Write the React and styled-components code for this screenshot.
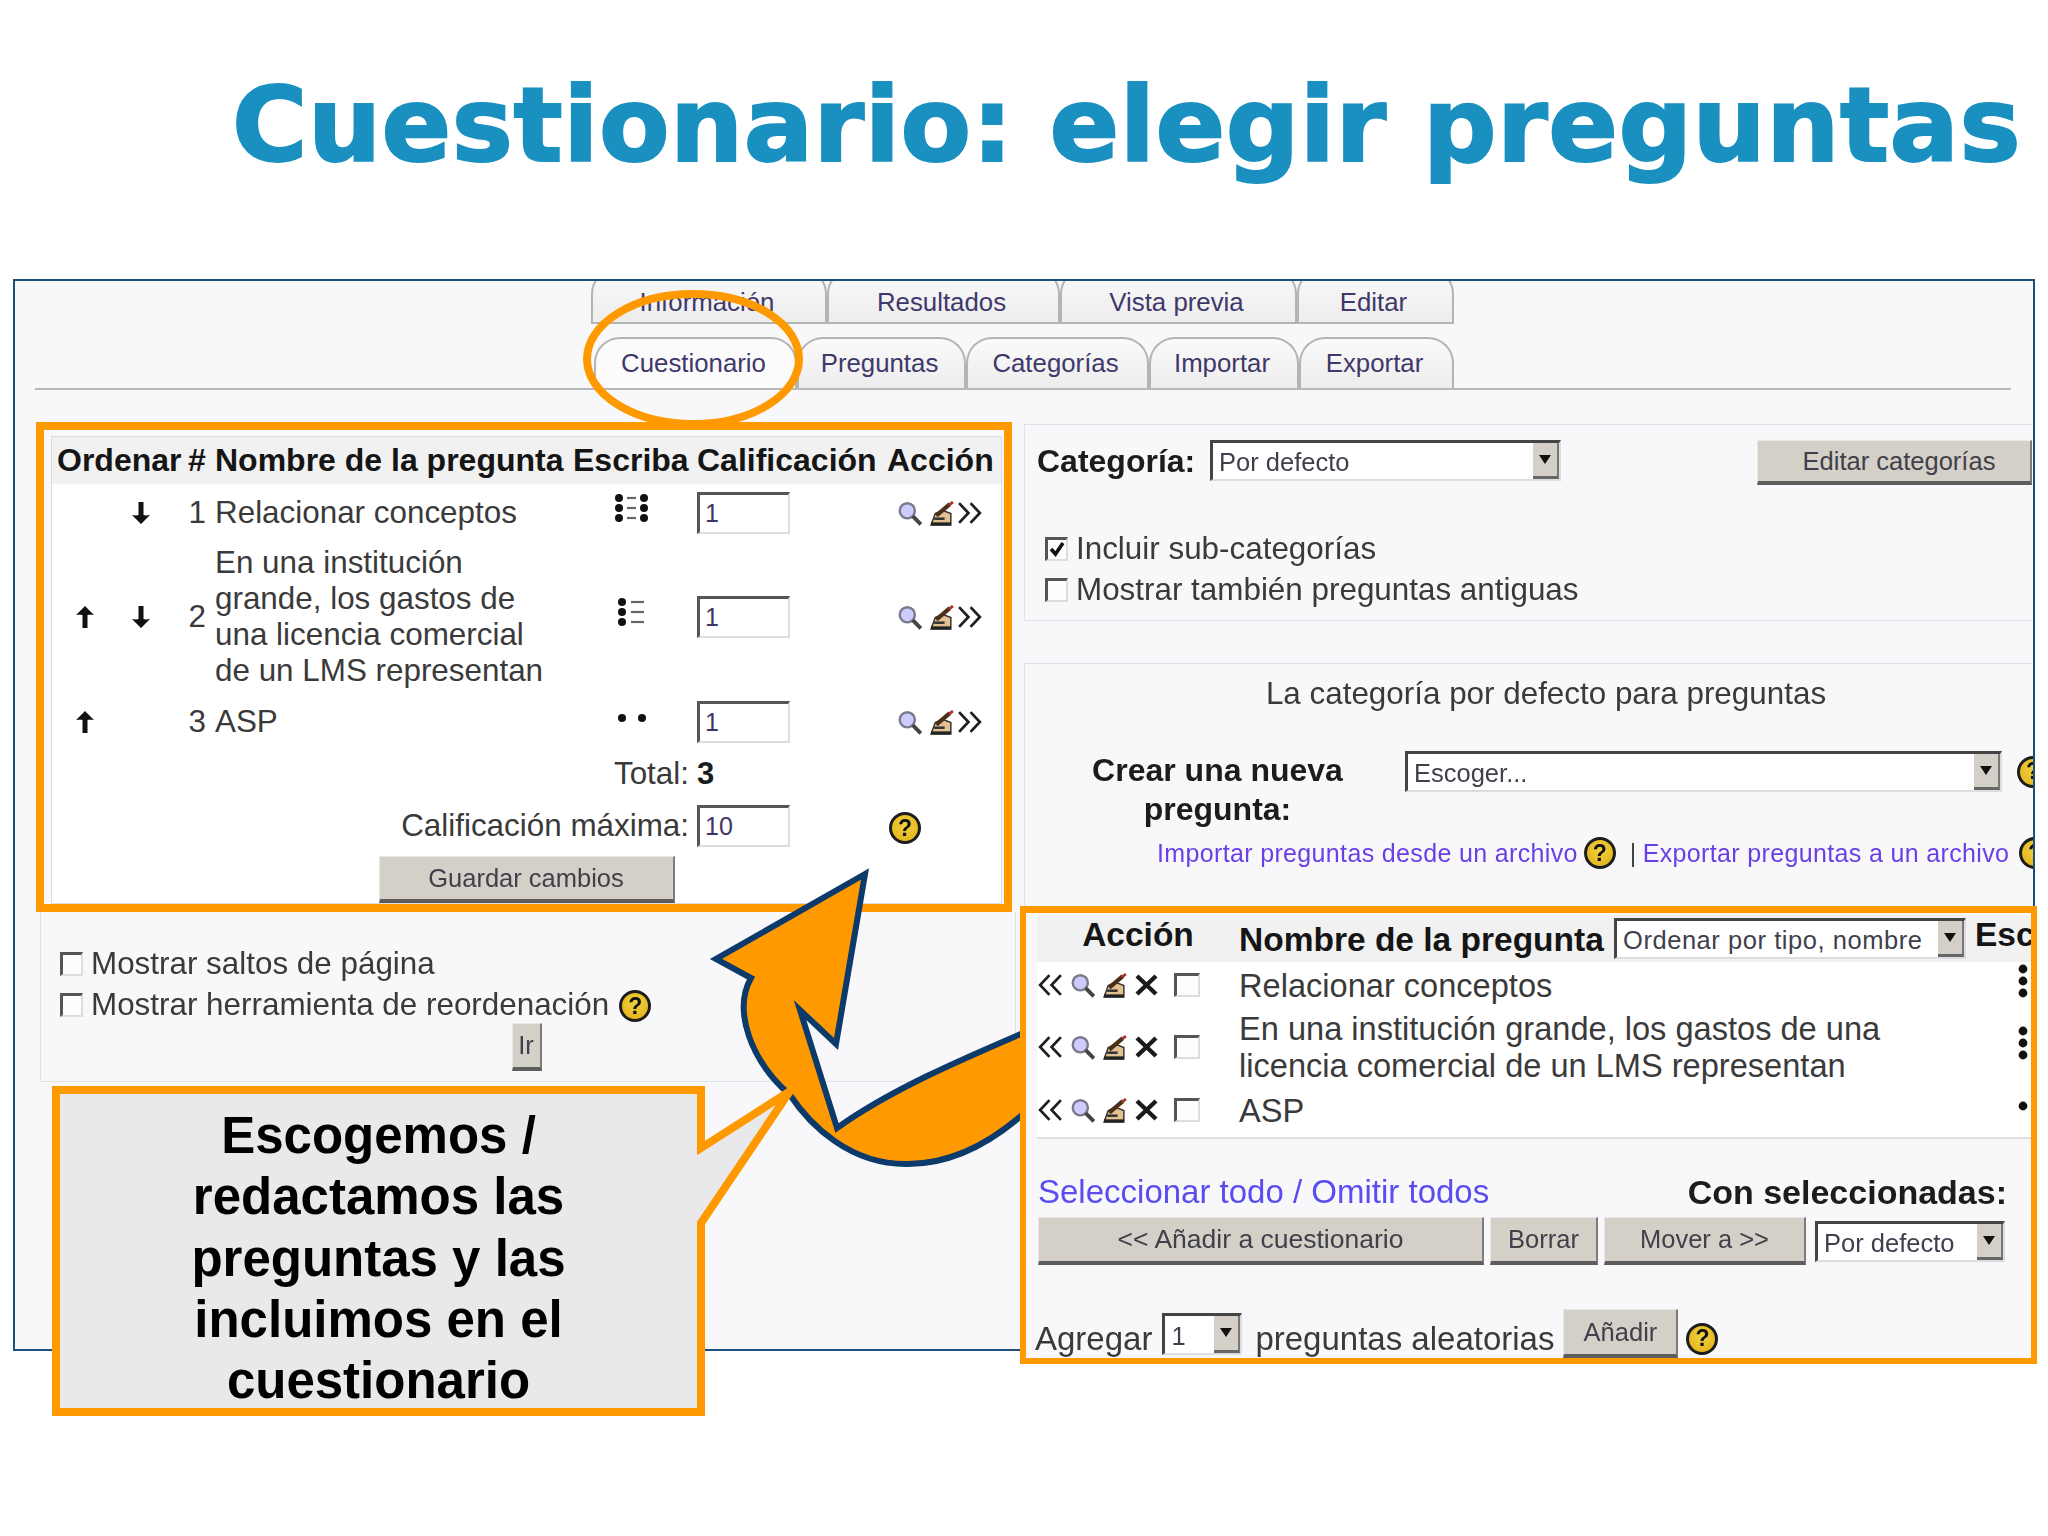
import React from 'react';
import styled, { createGlobalStyle } from 'styled-components';

const GlobalStyle = createGlobalStyle`
  html, body {
    margin: 0;
    background: #fff;
    font-family: 'Liberation Sans', Arial, sans-serif;
  }
`;

const Page = styled.div`
  width: 2048px;
  height: 1536px;
  overflow: hidden;
`;

const TitleBar = styled.header`
  align-items: center;
  box-sizing: border-box;
  display: flex;
  height: 279px;
  padding: 0 0 26px 232px;
`;

const Title = styled.h1`
  -webkit-text-stroke: 2px #1a90c0;
  color: #1a90c0;
  font-family: 'DejaVu Sans', Verdana, sans-serif;
  font-size: 102.8px;
  font-weight: 700;
  letter-spacing: 0.5px;
  line-height: 1;
  margin: 0;
  white-space: nowrap;
`;

const Frame = styled.section`
  background: #f8f8fa;
  border: 2px solid #1d4f7c;
  box-sizing: border-box;
  color: #3a3a3a;
  filter: blur(0.5px);
  font-size: 31.4px;
  height: 1072px;
  margin-left: 13px;
  position: relative;
  width: 2022px;
`;

const TabsArea = styled.nav`
  border-bottom: 2px solid #b8b8b8;
  margin: 0 22px 0 20px;
`;

const TabRow = styled.div`
  align-items: flex-end;
  box-sizing: border-box;
  display: flex;
  height: ${p => p.$h}px;
  margin-top: ${p => p.$top}px;
  overflow: hidden;
  padding-left: ${p => p.$left}px;
`;

const Tab = styled.div`
  align-items: center;
  background: ${p => (p.$active ? '#fbfbfc' : 'linear-gradient(#fafafa, #ededed)')};
  border: 2px solid #b4b4b4;
  border-bottom: ${p => (p.$active ? 'none' : p.$edge ? '2px solid #b4b4b4' : 'none')};
  border-radius: 26px 26px 0 0;
  box-sizing: border-box;
  color: #40386a;
  display: flex;
  flex: none;
  font-size: 25.8px;
  height: ${p => p.$h}px;
  justify-content: center;
  padding-right: 4px;
  padding-top: ${p => p.$pad}px;
  width: ${p => p.$w}px;
`;

const Columns = styled.div`
  display: flex;
  margin: 32px 0 0 21px;
`;

const LeftColumn = styled.div`
  flex: none;
  width: 980px;
`;

const RightColumn = styled.div`
  flex: none;
  margin: 2px 0 0 8px;
  width: 1009px;
`;

const QuizBox = styled.div`
  border: 8px solid #ff9900;
  box-sizing: border-box;
  height: 490px;
  padding: 6px 2px 0 7px;
  width: 976px;
`;

const QuizTable = styled.div`
  background: #fff;
  border: 1px solid #ddd;
  box-sizing: border-box;
  height: 100%;
`;

const QuizHead = styled.div`
  align-items: center;
  background: #f1f1f1;
  color: #151515;
  display: grid;
  font-size: 32px;
  font-weight: 700;
  grid-template-columns: 131px 27px 358px 124px 190px 1fr;
  height: 47px;
  padding-left: 5px;
  white-space: nowrap;
`;

const QuizRow = styled.div`
  align-items: center;
  display: grid;
  grid-template-columns: 65px 48px 41px 354px 137px 192px 1fr;
  height: ${p => p.$h}px;
`;

const Cell = styled.div`
  align-items: center;
  display: flex;
  justify-content: ${p => p.$align || 'flex-start'};
`;

const TypeCell = styled.div`
  display: flex;
  justify-content: center;
  margin-top: -8px;
  padding-left: 6px;
`;

const QuestionName = styled.div`
  line-height: 36px;
  padding-left: 9px;
`;

const SummaryRow = styled.div`
  align-items: center;
  display: grid;
  grid-template-columns: 645px 192px 1fr;
  height: ${p => p.$h}px;
`;

const SummaryLabel = styled.div`
  padding-right: 8px;
  text-align: right;
`;

const Strong = styled.b`
  color: #1c1c1c;
  font-size: ${p => p.$size || 32}px;
`;

const GradeInput = styled.input`
  background: #fff;
  border-color: #555 #ddd #ddd #555;
  border-style: solid;
  border-width: 3px 2px 2px 3px;
  box-sizing: border-box;
  color: #3f3560;
  font-family: inherit;
  font-size: 25px;
  height: 42px;
  padding: 0 5px;
  width: 93px;
`;

const Button = styled.div`
  align-items: center;
  background: #d4d0c8;
  border-bottom: 4px solid #5d5d5d;
  border-left: 1px solid #e8e8e8;
  border-right: 2px solid #7c7c7c;
  border-top: 1px solid #e8e8e8;
  box-sizing: border-box;
  color: #40404a;
  display: flex;
  flex: none;
  font-size: ${p => p.$size || 25.5}px;
  height: ${p => p.$h || 47}px;
  justify-content: center;
  padding-left: ${p => p.$pad || 0}px;
  width: ${p => p.$w}px;
`;

const CenterRow = styled.div`
  display: flex;
  justify-content: center;
`;

const OptionsBox = styled.div`
  border: 1px solid #e2e2e6;
  border-top: none;
  box-sizing: border-box;
  height: 170px;
  margin-left: 4px;
  padding: 31px 0 0 19px;
  width: 976px;
`;

const CheckRow = styled.div`
  align-items: center;
  display: flex;
  gap: 8px;
  height: 41px;
`;

const Check = styled.span`
  align-items: center;
  background: #fdfdfd;
  border-color: #555 #ddd #ddd #555;
  border-style: solid;
  border-width: 3px 2px 2px 3px;
  box-sizing: border-box;
  display: inline-flex;
  flex: none;
  height: 24px;
  justify-content: center;
  width: ${p => p.$w || 23}px;
`;

const Help = styled.span`
  align-items: center;
  background: radial-gradient(circle at 50% 40%, #f2d23e, #dfae16);
  border: 3px solid #1c1c1c;
  border-radius: 50%;
  box-sizing: border-box;
  color: #111;
  display: inline-flex;
  flex: none;
  font-size: 23px;
  font-weight: 700;
  height: 32px;
  justify-content: center;
  line-height: 1;
  margin-left: ${p => p.$left || 0}px;
  margin-top: ${p => p.$top || 0}px;
  width: 32px;
`;

const GoRow = styled.div`
  display: flex;
  justify-content: center;
  margin-top: -2px;
  padding-right: 22px;
`;

const Panel = styled.div`
  border-bottom: ${p => (p.$open ? 'none' : '1px solid #e2e2e6')};
  border-left: 1px solid #e2e2e6;
  border-top: 1px solid #e2e2e6;
  box-sizing: border-box;
  height: ${p => p.$h}px;
  margin-top: ${p => p.$top || 0}px;
  overflow: hidden;
`;

const CategoryRow = styled.div`
  align-items: flex-start;
  display: flex;
  margin-top: 15px;
  padding-left: 12px;
  padding-right: 1px;
`;

const CategoryLabel = styled.b`
  color: #1c1c1c;
  flex: none;
  font-size: 32px;
  line-height: 42px;
  width: 173px;
`;

const SelectBox = styled.div`
  align-items: stretch;
  background: #fff;
  border-color: #444 #ddd #ddd #444;
  border-style: solid;
  border-width: 3px 2px 2px 3px;
  box-sizing: border-box;
  color: #3f3f4d;
  display: flex;
  flex: none;
  font-size: 25.5px;
  font-weight: 400;
  height: ${p => p.$h || 41}px;
  justify-content: space-between;
  letter-spacing: ${p => p.$spacing || 0}px;
  line-height: ${p => (p.$h || 41) - 2}px;
  overflow: hidden;
  padding-left: 6px;
  white-space: nowrap;
  width: ${p => p.$w}px;
`;

const SelectArrow = styled.span`
  align-items: center;
  background: #d4d0c8;
  border-bottom: 3px solid #666;
  border-right: 2px solid #777;
  box-sizing: border-box;
  display: flex;
  flex: none;
  justify-content: center;
  width: 26px;
`;

const ArrowGlyph = styled.i`
  border-left: 6px solid transparent;
  border-right: 6px solid transparent;
  border-top: 9px solid #111;
  height: 0;
  width: 0;
`;

const PushRight = styled.div`
  margin-left: auto;
`;

const CheckList = styled.div`
  margin-top: 43px;
  padding-left: 20px;
`;

const PanelCaption = styled.div`
  height: 60px;
  line-height: 60px;
  padding-left: 34px;
  text-align: center;
`;

const CreateRow = styled.div`
  align-items: flex-start;
  display: flex;
  margin-top: 27px;
  padding-left: 26px;
`;

const CreateLabel = styled.b`
  color: #1c1c1c;
  flex: none;
  font-size: 32px;
  line-height: 39px;
  text-align: center;
  width: 333px;
`;

const CreateSelect = styled.div`
  align-items: center;
  display: flex;
  gap: 15px;
  margin-left: 21px;
`;

const FileLinks = styled.div`
  align-items: center;
  color: #6a3fe6;
  display: flex;
  font-size: 25px;
  height: 40px;
  letter-spacing: 0.35px;
  margin-top: 4px;
  padding-left: 132px;
  white-space: nowrap;
`;

const Pipe = styled.span`
  color: #444;
  margin: 0 6px 0 14px;
`;

const BankBox = styled.div`
  background: #f8f8fa;
  border: 6px solid #ff9900;
  border-top-width: 7px;
  box-sizing: border-box;
  height: 458px;
  margin-left: -4px;
  overflow: hidden;
  position: relative;
  width: 1017px;
  z-index: 2;
`;

const BankTable = styled.div`
  background: #fff;
  border-bottom: 2px solid #dedede;
  margin: 2px 0 0 11px;
  padding-bottom: 3px;
`;

const BankHead = styled.div`
  align-items: center;
  background: #f1f1f1;
  color: #151515;
  display: flex;
  font-size: 33.5px;
  font-weight: 700;
  height: 47px;
  white-space: nowrap;
`;

const BankActionHead = styled.div`
  flex: none;
  margin-top: -8px;
  text-align: center;
  width: 202px;
`;

const BankNameHead = styled.div`
  flex: none;
  margin-top: 2px;
  width: 375px;
`;

const BankTypeHead = styled.div`
  flex: none;
  margin: -8px 0 0 9px;
`;

const BankRow = styled.div`
  align-items: center;
  display: flex;
  height: ${p => p.$h}px;
`;

const BankActions = styled.div`
  align-items: center;
  display: flex;
  flex: none;
  gap: 7px;
  width: 202px;
`;

const BankName = styled.div`
  flex: 1;
  font-size: 32.6px;
  line-height: 37px;
`;

const BankType = styled.div`
  flex: none;
  width: 15px;
`;

const SelectRow = styled.div`
  align-items: center;
  display: flex;
  height: 40px;
  justify-content: space-between;
  margin: 33px 24px 0 12px;
`;

const LinkText = styled.div`
  color: #5a4cf0;
  font-size: 33px;
  white-space: nowrap;
`;

const ActionRow = styled.div`
  align-items: flex-start;
  display: flex;
  gap: 6px;
  margin: 5px 0 0 12px;
`;

const SelectDrop = styled.div`
  margin: 4px 0 0 3px;
`;

const BottomRow = styled.div`
  align-items: center;
  display: flex;
  font-size: 33px;
  height: 53px;
  margin: 42px 0 0 9px;
`;

const BottomText = styled.span`
  margin-top: 10px;
`;

const Gap = styled.span`
  flex: none;
  width: ${p => p.$w}px;
`;

const Annotations = styled.svg`
  height: 1536px;
  left: -15px;
  pointer-events: none;
  position: absolute;
  top: -281px;
  width: 2048px;
  z-index: 1;
`;

const Callout = styled.aside`
  box-sizing: border-box;
  color: #000;
  font-size: 51px;
  font-weight: 700;
  height: 330px;
  left: 37px;
  line-height: 61.3px;
  padding-top: 19px;
  position: absolute;
  text-align: center;
  top: 805px;
  width: 653px;
  z-index: 1;
`;

const CalloutShape = styled.svg`
  height: 340px;
  left: 0;
  overflow: visible;
  position: absolute;
  top: 0;
  width: 760px;
  z-index: -1;
`;

const UpArrow = ({ flip }) => (
  <svg width="18" height="22" viewBox="0 0 18 22" style={flip ? { transform: 'rotate(180deg)' } : undefined}>
    <path d="M9 0 L18 9 C15 8.5 13 8.5 11.5 9 V22 H6.5 V9 C5 8.5 3 8.5 0 9 Z" fill="#111" />
  </svg>
);

const Magnifier = () => (
  <svg width="26" height="25" viewBox="0 0 24 23">
    <circle cx="9.5" cy="9" r="7" fill="#ccccff" stroke="#7a7a8c" strokeWidth="2.2" />
    <path d="M14.5 14 L22 21.5" stroke="#444" strokeWidth="3.6" />
  </svg>
);

const Pen = () => (
  <svg width="24" height="25" viewBox="0 0 23 24">
    <path d="M1 23 L5 12 L12 9 L20 12 V23 Z" fill="#e3c193" stroke="#333" strokeWidth="1.4" />
    <path d="M6 14 L19 3" stroke="#4b2f17" strokeWidth="4" />
    <path d="M18 4 L22 1" stroke="#a33" strokeWidth="2.6" />
    <path d="M1 22 H20" stroke="#222" strokeWidth="3" />
    <path d="M4 17 H14" stroke="#333" strokeWidth="2.4" />
  </svg>
);

const Chevrons = ({ left }) => (
  <svg width="26" height="24" viewBox="0 0 25 23" style={left ? { transform: 'scaleX(-1)' } : undefined}>
    <path d="M2 2 L11 11.5 L2 21 M13 2 L22 11.5 L13 21" fill="none" stroke="#1e1e1e" strokeWidth="2.6" />
  </svg>
);

const Cross = () => (
  <svg width="25" height="24" viewBox="0 0 25 24">
    <path d="M3 3 L22 21 M22 3 L3 21" stroke="#1a1a1a" strokeWidth="4.4" />
  </svg>
);

const CheckMark = () => (
  <svg width="16" height="16" viewBox="0 0 16 16">
    <path d="M2 8 L6.5 13 L14 2" fill="none" stroke="#111" strokeWidth="3.6" />
  </svg>
);

const TypeDots = ({ kind }) => (
  <svg width="34" height="32" viewBox="0 0 34 32">
    {kind === 'pair' && (
      <>
        <circle cx="7" cy="16" r="4" fill="#111" />
        <circle cx="27" cy="16" r="4" fill="#111" />
      </>
    )}
    {kind !== 'pair' &&
      (kind === 'match' ? [4, 29] : [7]).map(x =>
        [5, 15, 25].map(y => <circle key={`${x}-${y}`} cx={x} cy={y} r="4" fill="#111" />),
      )}
    {kind === 'match' &&
      [5, 15, 25].map(y => <path key={y} d={`M12 ${y} H21`} stroke="#666" strokeWidth="2.2" />)}
    {kind === 'list' &&
      [5, 15, 25].map(y => <path key={y} d={`M16 ${y} H29`} stroke="#666" strokeWidth="2.2" />)}
  </svg>
);

const RowDots = ({ count }) => (
  <svg width="15" height="40" viewBox="0 0 15 40">
    {(count === 3 ? [8, 20, 32] : [20]).map(y => (
      <circle key={y} cx="7" cy={y} r="4.4" fill="#111" />
    ))}
  </svg>
);

const Select = ({ children, ...rest }) => (
  <SelectBox {...rest}>
    <span>{children}</span>
    <SelectArrow>
      <ArrowGlyph />
    </SelectArrow>
  </SelectBox>
);

const QuestionActions = () => (
  <Cell>
    <Gap $w={8} />
    <Magnifier />
    <Gap $w={7} />
    <Pen />
    <Gap $w={3} />
    <Chevrons />
  </Cell>
);

const BankRowActions = () => (
  <BankActions>
    <Chevrons left />
    <Magnifier />
    <Pen />
    <Cross />
    <Gap $w={1} />
    <Check $w={26} />
  </BankActions>
);

const App = () => (
  <Page>
    <GlobalStyle />
    <TitleBar>
      <Title>Cuestionario: elegir preguntas</Title>
    </TitleBar>
    <Frame>
      <TabsArea>
        <TabRow $h={43} $top={0} $left={556}>
          <Tab $h={56} $w={236} $pad={12} $edge>Información</Tab>
          <Tab $h={56} $w={233} $pad={12} $edge>Resultados</Tab>
          <Tab $h={56} $w={237} $pad={12} $edge>Vista previa</Tab>
          <Tab $h={56} $w={157} $pad={12} $edge>Editar</Tab>
        </TabRow>
        <TabRow $h={51} $top={13} $left={559}>
          <Tab $h={51} $w={203} $active>Cuestionario</Tab>
          <Tab $h={51} $w={169}>Preguntas</Tab>
          <Tab $h={51} $w={183}>Categorías</Tab>
          <Tab $h={51} $w={150}>Importar</Tab>
          <Tab $h={51} $w={155}>Exportar</Tab>
        </TabRow>
      </TabsArea>

      <Columns>
        <LeftColumn>
          <QuizBox>
            <QuizTable>
              <QuizHead>
                <span>Ordenar</span>
                <span>#</span>
                <span>Nombre de la pregunta</span>
                <span>Escriba</span>
                <span>Calificación</span>
                <span>Acción</span>
              </QuizHead>
              <QuizRow $h={58}>
                <span />
                <Cell $align="center"><UpArrow flip /></Cell>
                <Cell $align="flex-end">1</Cell>
                <QuestionName>Relacionar conceptos</QuestionName>
                <TypeCell><TypeDots kind="match" /></TypeCell>
                <GradeInput readOnly value="1" />
                <QuestionActions />
              </QuizRow>
              <QuizRow $h={150}>
                <Cell $align="center"><UpArrow /></Cell>
                <Cell $align="center"><UpArrow flip /></Cell>
                <Cell $align="flex-end">2</Cell>
                <QuestionName>
                  En una institución<br />grande, los gastos de<br />una licencia comercial<br />de un LMS representan
                </QuestionName>
                <TypeCell><TypeDots kind="list" /></TypeCell>
                <GradeInput readOnly value="1" />
                <QuestionActions />
              </QuizRow>
              <QuizRow $h={60}>
                <Cell $align="center"><UpArrow /></Cell>
                <span />
                <Cell $align="flex-end">3</Cell>
                <QuestionName>ASP</QuestionName>
                <TypeCell><TypeDots kind="pair" /></TypeCell>
                <GradeInput readOnly value="1" />
                <QuestionActions />
              </QuizRow>
              <SummaryRow $h={44}>
                <SummaryLabel>Total:</SummaryLabel>
                <Strong $size={31}>3</Strong>
                <span />
              </SummaryRow>
              <SummaryRow $h={60}>
                <SummaryLabel>Calificación máxima:</SummaryLabel>
                <GradeInput readOnly value="10" />
                <Help $top={4}>?</Help>
              </SummaryRow>
              <CenterRow>
                <Button $w={296}>Guardar cambios</Button>
              </CenterRow>
            </QuizTable>
          </QuizBox>
          <OptionsBox>
            <CheckRow>
              <Check />
              Mostrar saltos de página
            </CheckRow>
            <CheckRow>
              <Check />
              Mostrar herramienta de reordenación
              <Help $left={2} $top={3}>?</Help>
            </CheckRow>
            <GoRow>
              <Button $w={30} $h={48}>Ir</Button>
            </GoRow>
          </OptionsBox>
        </LeftColumn>

        <RightColumn>
          <Panel $h={197}>
            <CategoryRow>
              <CategoryLabel>Categoría:</CategoryLabel>
              <Select $w={351}>Por defecto</Select>
              <PushRight>
                <Button $w={275} $h={45} $pad={10} $size={25.5}>Editar categorías</Button>
              </PushRight>
            </CategoryRow>
            <CheckList>
              <CheckRow>
                <Check><CheckMark /></Check>
                Incluir sub-categorías
              </CheckRow>
              <CheckRow>
                <Check />
                Mostrar también preguntas antiguas
              </CheckRow>
            </CheckList>
          </Panel>
          <Panel $h={243} $top={42} $open>
            <PanelCaption>La categoría por defecto para preguntas</PanelCaption>
            <CreateRow>
              <CreateLabel>Crear una nueva<br />pregunta:</CreateLabel>
              <CreateSelect>
                <Select $w={597}>Escoger...</Select>
                <Help>?</Help>
              </CreateSelect>
            </CreateRow>
            <FileLinks>
              Importar preguntas desde un archivo
              <Help $left={6}>?</Help>
              <Pipe>|</Pipe>
              Exportar preguntas a un archivo
              <Help $left={10}>?</Help>
            </FileLinks>
          </Panel>
          <BankBox>
            <BankTable>
              <BankHead>
                <BankActionHead>Acción</BankActionHead>
                <BankNameHead>Nombre de la pregunta</BankNameHead>
                <Select $w={352} $h={41} $spacing={0.55}>Ordenar por tipo, nombre</Select>
                <BankTypeHead>Esc</BankTypeHead>
              </BankHead>
              <BankRow $h={46}>
                <BankRowActions />
                <BankName>Relacionar conceptos</BankName>
                <BankType><RowDots count={3} /></BankType>
              </BankRow>
              <BankRow $h={78}>
                <BankRowActions />
                <BankName>En una institución grande, los gastos de una<br />licencia comercial de un LMS representan</BankName>
                <BankType><RowDots count={3} /></BankType>
              </BankRow>
              <BankRow $h={48}>
                <BankRowActions />
                <BankName>ASP</BankName>
                <BankType><RowDots count={1} /></BankType>
              </BankRow>
            </BankTable>
            <SelectRow>
              <LinkText>Seleccionar todo / Omitir todos</LinkText>
              <Strong $size={34}>Con seleccionadas:</Strong>
            </SelectRow>
            <ActionRow>
              <Button $w={446} $h={48} $size={26.5}>&lt;&lt; Añadir a cuestionario</Button>
              <Button $w={108} $h={48}>Borrar</Button>
              <Button $w={202} $h={48}>Mover a &gt;&gt;</Button>
              <SelectDrop>
                <Select $w={190} $h={41}>Por defecto</Select>
              </SelectDrop>
            </ActionRow>
            <BottomRow>
              <BottomText>Agregar</BottomText>
              <Gap $w={10} />
              <Select $w={80} $h={42}>1</Select>
              <Gap $w={13} />
              <BottomText>preguntas aleatorias</BottomText>
              <Gap $w={9} />
              <Button $w={115} $h={49}>Añadir</Button>
              <Gap $w={8} />
              <Help $top={10}>?</Help>
            </BottomRow>
          </BankBox>
        </RightColumn>
      </Columns>

      <Annotations viewBox="0 0 2048 1536">
        <ellipse cx="693" cy="359" rx="106" ry="65" fill="none" stroke="#ff9900" strokeWidth="8" />
        <path
          d="M865 874 L716 959 L751 978 C733 1010 750 1060 790 1095 C810 1125 850 1165 908 1164 C950 1164 990 1145 1030 1108 L1030 1030 C960 1060 890 1090 837 1128 L800 1010 L836 1044 Z"
          fill="#ff9900"
          stroke="#0b3a6b"
          strokeWidth="6"
          strokeLinejoin="miter"
        />
      </Annotations>

      <Callout>
        <CalloutShape viewBox="0 0 760 340">
          <path
            d="M4 4 H649 V62 L738 5 L649 137 V326 H4 Z"
            fill="#e9e9ec"
            stroke="#ff9900"
            strokeWidth="8"
            strokeMiterlimit="3"
          />
        </CalloutShape>
        Escogemos /<br />redactamos las<br />preguntas y las<br />incluimos en el<br />cuestionario
      </Callout>
    </Frame>
  </Page>
);

export default App;
